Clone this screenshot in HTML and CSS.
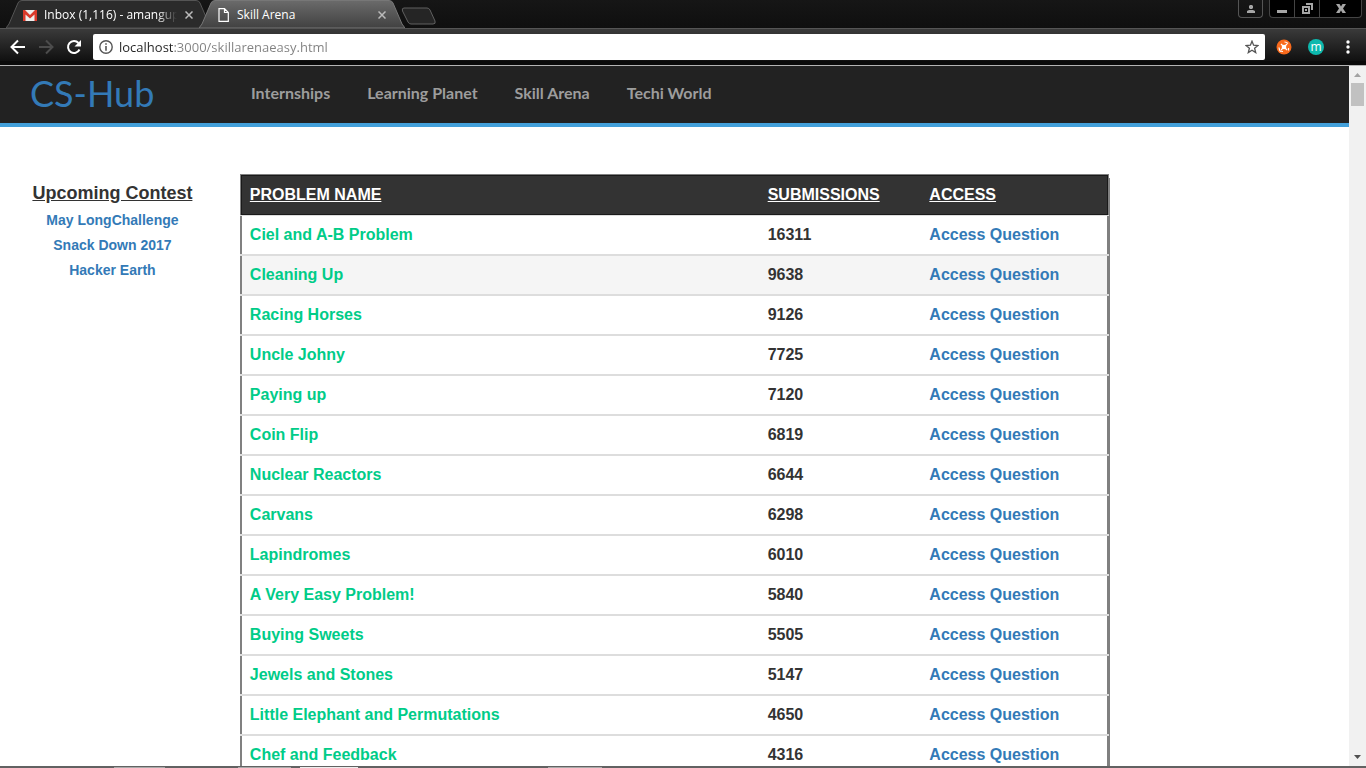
FILE: index.html
```html
<!DOCTYPE html>
<html lang="en">
<head>
<meta charset="utf-8">
<title>Skill Arena</title>
<link rel="stylesheet" href="styles.css">
</head>
<body>
<header class="browser">
  <div class="tabstrip">
    <div class="tab">
      <svg class="tab-shape" viewBox="0 0 206 28" preserveAspectRatio="none" aria-hidden="true"><path d="M0 28 3 24 12 3Q13 .5 16 .5H190Q193 .5 194 3L203 24 206 28Z" fill="#2b2b2b" stroke="#555"/></svg>
      <svg class="tab-icon gmail" viewBox="0 0 14 11" aria-hidden="true"><path d="M0 0H14V11H0Z" fill="#eee"/><path d="M0 0H2L7 5 12 0H14V11H11.500V4.500L7 8.500 2.500 4.500V11H0Z" fill="#d9392b"/></svg>
      <span class="tab-title fade">Inbox (1,116) - amangup</span>
      <button class="tab-close" aria-label="Close tab"><svg viewBox="0 0 8 8"><path d="M.5.5 7.500 7.500M7.500.5.5 7.500"/></svg></button>
    </div>
    <div class="tab active">
      <svg class="tab-shape" viewBox="0 0 206 28" preserveAspectRatio="none" aria-hidden="true"><defs><linearGradient id="g" x2="0" y2="1"><stop stop-color="#6b6b6b"/><stop offset="1" stop-color="#414141"/></linearGradient></defs><path d="M0 28 3 24 12 3Q13 .5 16 .5H190Q193 .5 194 3L203 24 206 28Z" fill="url(#g)" stroke="#777"/></svg>
      <svg class="tab-icon document" viewBox="0 0 11 14" aria-hidden="true"><path d="M1 .7H6.500L10.300 4.500V13.300H1ZM6.500 1V4.500H10" fill="none" stroke="#fff" stroke-width="1.200"/></svg>
      <span class="tab-title">Skill Arena</span>
      <button class="tab-close" aria-label="Close tab"><svg viewBox="0 0 8 8"><path d="M.5.5 7.500 7.500M7.500.5.5 7.500"/></svg></button>
    </div>
    <button class="new-tab" aria-label="New tab"><svg viewBox="0 0 36 18"><path d="M3 1H26Q28 1 29 3L34 14Q35 17 32 17H10Q8 17 7 15L1.500 4Q.5 1 3 1Z" fill="#252525" stroke="#606060"/></svg></button>
    <div class="window-controls">
      <button class="profile" aria-label="Profile"><svg width="8" height="8" viewBox="0 0 8 8"><path d="M3 0H5L6 1V3L5 4H3L2 3V1ZM0 8V6L2 5H6L8 6V8Z"/></svg></button>
      <div class="frame-buttons">
        <button aria-label="Minimize"><svg width="10" height="10" viewBox="0 0 10 10"><path d="M0 6H10V9H0Z"/></svg></button>
        <button aria-label="Restore"><svg width="11" height="11" viewBox="0 0 11 11"><path d="M4 0H11V7H9V2H4ZM0 3H8V11H0ZM2 5V9H6V5ZM3 6H5V8H3Z" fill-rule="evenodd"/></svg></button>
        <button class="close" aria-label="Close"><svg width="10" height="9" viewBox="0 0 10 9"><path d="M0 0H3.500L5 2.500 6.500 0H10L7 4.500 10 9H6.500L5 6.500 3.500 9H0L3 4.500Z"/></svg></button>
      </div>
    </div>
  </div>
  <div class="toolbar">
    <button class="tool" aria-label="Back"><svg viewBox="0 0 16 16"><path d="M15 8H2M8 1.500 1.500 8 8 14.500" stroke="#fff"/></svg></button>
    <button class="tool" aria-label="Forward"><svg viewBox="0 0 16 16"><path d="M1 8H14M8 1.500 14.500 8 8 14.500" stroke="#4c4c4c"/></svg></button>
    <button class="tool reload" aria-label="Reload"><svg viewBox="0 0 16 16"><path d="M13.500 10.500A6 6 0 1 1 12.500 4" stroke="#fff"/><path d="M15 1V7.500H8.500Z" fill="#fff"/></svg></button>
    <div class="address">
      <svg class="info" viewBox="0 0 14 14" aria-hidden="true"><circle cx="7" cy="7" r="6.200" fill="none" stroke="#555" stroke-width="1.400"/><path d="M6.200 6H7.800V10.700H6.200ZM6.200 3.200H7.800V4.800H6.200Z" fill="#555"/></svg>
      <input class="url" type="text" aria-label="Address" value="localhost:3000/skillarenaeasy.html">
      <button class="star" aria-label="Bookmark this page"><svg viewBox="0 0 14 14"><path d="M7 1.200 8.600 5.200 13 5.500 9.600 8.200 10.700 12.600 7 10.200 3.300 12.600 4.400 8.200 1 5.500 5.400 5.200Z" fill="none" stroke="#555" stroke-width="1.300"/></svg></button>
    </div>
    <button class="ext" aria-label="Extension"><svg viewBox="0 0 16 16"><circle cx="8" cy="8" r="7.500" fill="#f96a1c"/><g stroke="#fff" fill="none"><path d="M5 5 11 11M11 5 5 11" stroke-width="1.300"/><path d="M8.500 3Q10.500 3 12 4.500M3 8.500Q3.200 11 4.500 12.500M4 12 7 12.500M12.500 9V11.500" stroke-width="1.200"/></g><circle cx="8" cy="8" r="2.300" fill="#fff"/></svg></button>
    <button class="ext avatar" aria-label="Account">m</button>
    <button class="more" aria-label="Menu"><svg width="4" height="14" viewBox="0 0 4 14"><circle cx="2" cy="2" r="1.700"/><circle cx="2" cy="7" r="1.700"/><circle cx="2" cy="12" r="1.700"/></svg></button>
  </div>
</header>
<div class="viewport">
  <div class="page">
    <nav class="navbar">
      <a class="brand" href="#">CS-Hub</a>
      <a href="#">Internships</a>
      <a href="#">Learning Planet</a>
      <a href="#">Skill Arena</a>
      <a href="#">Techi World</a>
    </nav>
    <div class="content">
      <aside class="contests">
        <h2>Upcoming Contest</h2>
        <a href="#">May LongChallenge</a>
        <a href="#">Snack Down 2017</a>
        <a href="#">Hacker Earth</a>
      </aside>
      <main class="problems">
        <table>
          <thead><tr><th class="name">PROBLEM NAME</th><th class="count">SUBMISSIONS</th><th>ACCESS</th></tr></thead>
          <tbody>
            <tr><td><a href="#">Ciel and A-B Problem</a></td><td>16311</td><td><a href="#">Access Question</a></td></tr>
            <tr class="hovered"><td><a href="#">Cleaning Up</a></td><td>9638</td><td><a href="#">Access Question</a></td></tr>
            <tr><td><a href="#">Racing Horses</a></td><td>9126</td><td><a href="#">Access Question</a></td></tr>
            <tr><td><a href="#">Uncle Johny</a></td><td>7725</td><td><a href="#">Access Question</a></td></tr>
            <tr><td><a href="#">Paying up</a></td><td>7120</td><td><a href="#">Access Question</a></td></tr>
            <tr><td><a href="#">Coin Flip</a></td><td>6819</td><td><a href="#">Access Question</a></td></tr>
            <tr><td><a href="#">Nuclear Reactors</a></td><td>6644</td><td><a href="#">Access Question</a></td></tr>
            <tr><td><a href="#">Carvans</a></td><td>6298</td><td><a href="#">Access Question</a></td></tr>
            <tr><td><a href="#">Lapindromes</a></td><td>6010</td><td><a href="#">Access Question</a></td></tr>
            <tr><td><a href="#">A Very Easy Problem!</a></td><td>5840</td><td><a href="#">Access Question</a></td></tr>
            <tr><td><a href="#">Buying Sweets</a></td><td>5505</td><td><a href="#">Access Question</a></td></tr>
            <tr><td><a href="#">Jewels and Stones</a></td><td>5147</td><td><a href="#">Access Question</a></td></tr>
            <tr><td><a href="#">Little Elephant and Permutations</a></td><td>4650</td><td><a href="#">Access Question</a></td></tr>
            <tr><td><a href="#">Chef and Feedback</a></td><td>4316</td><td><a href="#">Access Question</a></td></tr>
          </tbody>
        </table>
      </main>
    </div>
  </div>
  <div class="scrollbar" aria-hidden="true">
    <svg class="arrow" viewBox="0 0 17 17"><path d="M5 11 8.500 7 12 11Z" fill="#a3a3a3"/></svg>
    <div class="thumb"></div>
    <svg class="arrow down" viewBox="0 0 17 17"><path d="M5 6H12L8.500 10Z" fill="#505050"/></svg>
  </div>
</div>
<div class="taskbar"></div>
</body>
</html>
```

FILE: styles.css
```css
* { box-sizing: border-box; }
body {
  margin: 0;
  height: 100vh;
  display: flex;
  flex-direction: column;
  overflow: hidden;
  background: #fff;
  color: #333;
  font-family: "Liberation Sans", Arial, sans-serif;
}
button { border: 0; padding: 0; margin: 0; background: none; display: flex; align-items: center; justify-content: center; }
svg { display: block; }
a { color: #337ab7; text-decoration: none; }

.browser { flex: none; background: #0a0a0a; border-bottom: 1px solid #b4b4b4; padding-bottom: 4px; font-family: "Open Sans", sans-serif; }
.tabstrip { display: flex; height: 28px; padding-left: 6px; background: linear-gradient(#161616, #0f0f0f); }
.tab { position: relative; display: flex; align-items: center; width: 206px; padding: 2px 15px 0 17px; }
.tab.active { margin-left: -13px; z-index: 1; }
.tab-shape { position: absolute; inset: 0; width: 100%; height: 100%; }
.tab-icon { position: relative; flex: none; }
.gmail { width: 14px; height: 11px; margin-right: 7px; }
.document { width: 11px; height: 14px; margin: 0 8px 0 2px; }
.tab-title { position: relative; flex: 1; overflow: hidden; white-space: nowrap; font-size: 12px; line-height: 18px; color: #fff; }
.fade { mask-image: linear-gradient(90deg, #000 85%, transparent); }
.tab-close { position: relative; width: 8px; height: 8px; margin: 0 4px 0 8px; }
.tab-close svg { width: 8px; height: 8px; stroke: #bbb; stroke-width: 1.5; }
.new-tab { width: 36px; height: 18px; margin: 7px 0 0 -4px; z-index: 2; }
.new-tab svg { width: 36px; height: 18px; }
.window-controls { display: flex; gap: 6px; margin-left: auto; padding-right: 4px; height: 18px; }
.window-controls svg { fill: #a6a6a6; }
.profile { width: 25px; border: 1px solid #555; border-top: 0; border-radius: 0 0 4px 4px; }
.frame-buttons { display: flex; border: 1px solid #444; border-top: 0; border-radius: 0 0 4px 4px; background: #000; }
.frame-buttons button { width: 25px; border-right: 1px solid #444; }
.frame-buttons .close { width: 41px; border: 0; }

.toolbar { display: flex; align-items: center; height: 33px; padding: 4px 16px 0 10px; border-top: 1px solid #555; background: linear-gradient(#3a3a3a, #101010); }
.tool { width: 16px; height: 16px; margin-right: 12px; }
.tool svg { width: 16px; height: 16px; fill: none; stroke-width: 2; }
.reload { margin-right: 11px; }
.address { flex: 1; display: flex; align-items: center; height: 26px; padding: 0 6px; background: #fff; border-radius: 2px; }
.info, .star, .star svg { width: 14px; height: 14px; flex: none; }
.url {
  flex: 1;
  min-width: 0;
  border: 0;
  padding: 0;
  margin: 0 6px;
  height: 22px;
  outline: 0;
  font: 13px/22px "Open Sans", sans-serif;
  color: #808080;
  background: linear-gradient(90deg, #222 54px, #808080 54px);
  background-clip: text;
  -webkit-text-fill-color: transparent;
}
.ext { width: 16px; height: 16px; margin-left: 11px; }
.ext svg { width: 16px; height: 16px; }
.avatar { margin: 0 22px 0 16px; border-radius: 50%; background: #0db8ad; color: #fff; font: 12px/14px "Open Sans", sans-serif; }
.more svg { fill: #fff; }

.viewport { flex: 1; min-height: 0; display: flex; }
.page { flex: 1; min-width: 0; overflow: hidden; }
.navbar { display: flex; align-items: center; gap: 37px; height: 61px; padding: 0 30px 3px; background: #222; border-bottom: 4px solid #43a0da; font: bold 16px/24px Lato, sans-serif; }
.navbar a { color: #9d9d9d; }
.navbar .brand { width: 184px; color: #337ab7; font-size: 36px; font-weight: 400; line-height: 54px; }
.content { display: grid; grid-template-columns: 2fr 8fr 2fr; padding-top: 47px; }
.contests { display: flex; flex-direction: column; align-items: center; padding-top: 9px; font-weight: bold; }
.contests h2 { margin: 0 0 5px; font-size: 18px; line-height: 20px; text-decoration: underline; }
.contests a { font-size: 14px; line-height: 25px; }
.problems { padding: 0 15px; }
table { width: 100%; table-layout: fixed; border-collapse: separate; border-spacing: 0; font-size: 16px; line-height: 20px; font-weight: bold; box-shadow: 1px 4px 0 #808080; background: #fff; }
th, td { text-align: left; padding: 9px 8px; border-bottom: 2px solid #ddd; }
th { padding: 10px 8px; background: #333; color: #fff; text-decoration: underline; border-top: 1px solid #808080; border-bottom: 1px solid #ddd; box-shadow: inset 0 1px #1a1a1a, inset 0 -1px #1a1a1a; }
.name { width: 59.8%; }
.count { width: 18.6%; }
th:first-child, td:first-child { padding-left: 10px; }
th:first-child { box-shadow: inset 1px 0 #808080, inset 2px 1px #1a1a1a, inset 0 -1px #1a1a1a; }
th:last-child { box-shadow: inset -1px 0 #808080, inset -2px 1px #1a1a1a, inset 0 -1px #1a1a1a; }
td:first-child { box-shadow: inset 2px 0 #808080; }
td:last-child { box-shadow: inset -2px 0 #808080; }
td:first-child a { color: #0c8; }
.hovered { background: #f5f5f5; }

.scrollbar { width: 17px; display: flex; flex-direction: column; align-items: center; background: #f1f1f1; }
.arrow { width: 17px; height: 17px; }
.thumb { width: 13px; height: 23px; background: #c1c1c1; }
.down { margin-top: auto; }
.taskbar { flex: none; height: 2px; background: linear-gradient(90deg, transparent 114px, #aaa 114px 165px, transparent 165px 238px, #aaa 238px 291px, transparent 291px 300px, #eee 300px 358px, transparent 358px 548px, #aaa 548px 602px, transparent 602px) 0 1px no-repeat #626262; }
```
